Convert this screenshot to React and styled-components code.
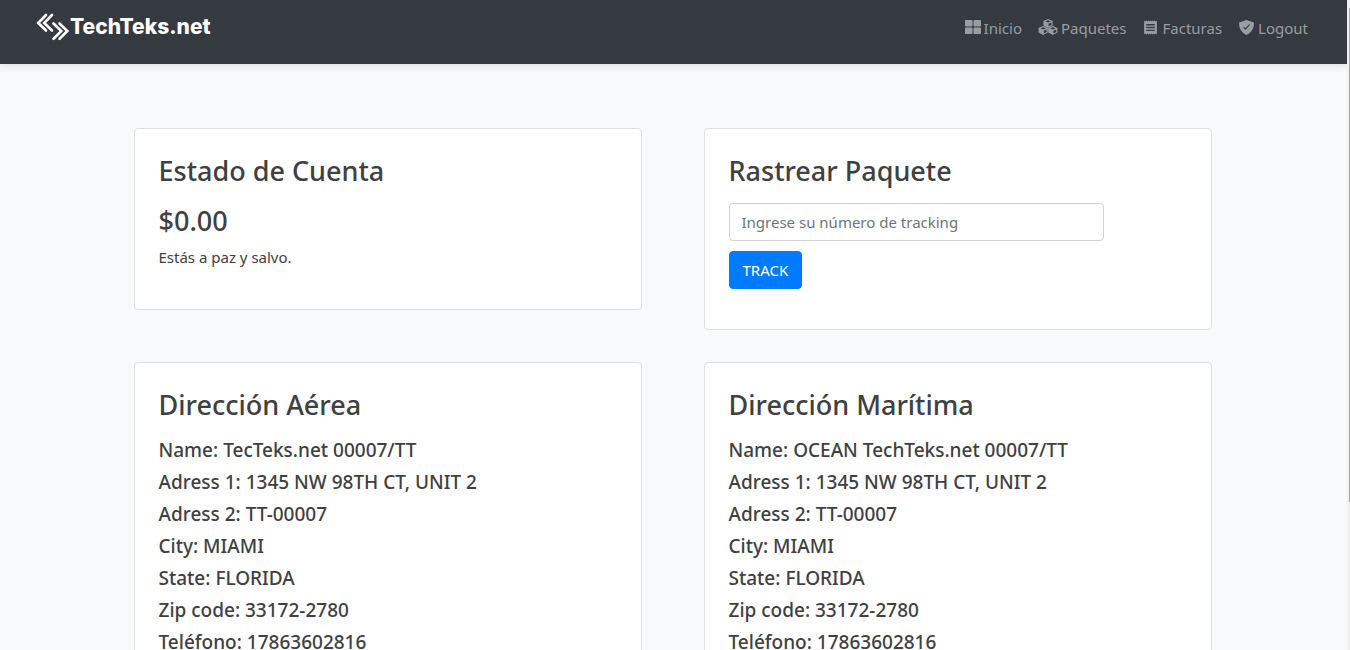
import React from 'react'
import styled, { createGlobalStyle } from 'styled-components'
import { FaThLarge } from 'react-icons/fa'
import { MdReceipt } from 'react-icons/md'
import { IoShieldCheckmark } from 'react-icons/io5'

const GlobalStyle = createGlobalStyle`
    *, *::before, *::after {
        box-sizing: border-box;
    }

    body {
        margin: 0;
        background-color: #f8f9fb;
        color: #404040;
        font-family: "Segoe UI", "Noto Sans", "Liberation Sans", sans-serif;
        font-size: 15px;
        line-height: 24px;
    }
`;

const Page = styled.div`
    padding-right: 3px;
`;

const ScrollRail = styled.div`
    position: fixed;
    top: 0;
    right: 0;
    bottom: 0;
    width: 3px;
    padding-top: 8px;
    background-color: #f1f1f1;
`;

const ScrollThumb = styled.div`
    width: 1px;
    height: 77%;
    margin-left: auto;
    background-color: #a8a8a8;
`;

const Navbar = styled.header`
    display: flex;
    justify-content: space-between;
    align-items: flex-start;
    height: 64px;
    padding: 12px 39px 0 36px;
    background-color: #343a40;
    box-shadow: 0 2px 8px rgba(0, 0, 0, 0.1);
`;

const Brand = styled.a`
    display: flex;
    align-items: center;
    color: white;
    font-family: Inter, sans-serif;
    font-size: 21px;
    font-weight: 800;
    line-height: 30px;
    text-decoration: none;
`;

const Nav = styled.nav`
    display: flex;
    gap: 16px;
    padding-top: 4px;
`;

const NavLink = styled.a`
    display: flex;
    gap: 3px;
    color: #9a9da0;
    text-decoration: none;

    svg {
        margin-top: 3px;
    }
`;

const Container = styled.main`
    display: grid;
    grid-template-columns: 1fr 1fr;
    align-items: start;
    gap: 32px 62px;
    max-width: 1140px;
    margin: 0 auto;
    padding: 64px 32px 64px 30px;
`;

const Card = styled.section`
    padding: 24px 24px 40px;
    background-color: white;
    border: 1px solid #dfdfdf;
    border-radius: 4px;
`;

const Title = styled.h3`
    margin: 0;
    padding-bottom: 11px;
    font-size: 27px;
    font-weight: 500;
    line-height: 36px;
`;

const Balance = styled(Title)`
    padding: 3px 0 6px;
`;

const Note = styled.p`
    margin: 0;
`;

const TrackForm = styled.form`
    display: flex;
    flex-direction: column;
    align-items: flex-start;
    gap: 10px;
    padding-top: 3px;
`;

const TrackInput = styled.input`
    width: 82%;
    height: 38px;
    padding: 6px 12px;
    border: 1px solid #ced4da;
    border-radius: 4px;
    color: #495057;
    font: inherit;

    &::placeholder {
        color: #6c757d;
    }
`;

const TrackButton = styled.button`
    height: 38px;
    padding: 6px 13px;
    border: 1px solid #007bff;
    border-radius: 4px;
    background-color: #007bff;
    color: white;
    font: inherit;
`;

const AddressLine = styled.h5`
    margin: 0;
    font-size: 19px;
    font-weight: 500;
    line-height: 32px;
`;

const LogoMark = () => (
    <svg width="34" height="30" viewBox="0 0 34 30" fill="none" stroke="white" strokeWidth="2.6" strokeLinecap="round">
        <path d="M10 3 L2.2 11 L10 18.5 M16 3 L8.2 11 L16 18.5" />
        <path d="M17.5 11.5 L25.3 19 L17.5 26.8 M23.5 11.5 L31.3 19 L23.5 26.8" />
    </svg>
)

// one box, with its lid and right side left open
const cube = 'M5 0 L9.6 2 V6.6 L5 9 L0.4 6.6 V2 Z M5 1.2 L2.4 2.4 L5 3.6 L7.6 2.4 Z M5.6 4.8 V7.4 L8.4 6 V3.6 Z'

const CubesIcon = () => (
    <svg width="20" height="16" viewBox="0 0 20 16" fill="currentColor" fillRule="evenodd">
        <path d={cube} transform="translate(5 0)" />
        <path d={cube} transform="translate(0.2 7)" />
        <path d={cube} transform="translate(9.8 7)" />
    </svg>
)

const navLinks = [
    { label: 'Inicio', href: '/', icon: <FaThLarge size={16} /> },
    { label: 'Paquetes', href: '/paquetes', icon: <CubesIcon /> },
    { label: 'Facturas', href: '/facturas', icon: <MdReceipt size={17} /> },
    { label: 'Logout', href: '/logout', icon: <IoShieldCheckmark size={17} /> },
]

const addresses = [
    { title: 'Dirección Aérea', name: 'TecTeks.net 00007/TT' },
    { title: 'Dirección Marítima', name: 'OCEAN TechTeks.net 00007/TT' },
]

const Header = () => (
    <Navbar>
        <Brand href='/'><LogoMark />TechTeks.net</Brand>
        <Nav>
            {navLinks.map(link => (
                <NavLink key={link.label} href={link.href}>{link.icon}{link.label}</NavLink>
            ))}
        </Nav>
    </Navbar>
)

const Address = ({ title, name }) => (
    <Card>
        <Title>{title}</Title>
        <AddressLine>Name: {name}</AddressLine>
        <AddressLine>Adress 1: 1345 NW 98TH CT, UNIT 2</AddressLine>
        <AddressLine>Adress 2: TT-00007</AddressLine>
        <AddressLine>City: MIAMI</AddressLine>
        <AddressLine>State: FLORIDA</AddressLine>
        <AddressLine>Zip code: 33172-2780</AddressLine>
        <AddressLine>Teléfono: 17863602816</AddressLine>
    </Card>
)

const App = () => {
    return (
        <Page>
            <GlobalStyle />
            <Header />
            <Container>
                <Card>
                    <Title>Estado de Cuenta</Title>
                    <Balance as='p'>$0.00</Balance>
                    <Note>Estás a paz y salvo.</Note>
                </Card>
                <Card>
                    <Title>Rastrear Paquete</Title>
                    <TrackForm onSubmit={e => e.preventDefault()}>
                        <TrackInput type='text' aria-label='Número de tracking' placeholder='Ingrese su número de tracking' />
                        <TrackButton type='submit'>TRACK</TrackButton>
                    </TrackForm>
                </Card>
                {addresses.map(address => <Address key={address.title} {...address} />)}
            </Container>
            <ScrollRail><ScrollThumb /></ScrollRail>
        </Page>
    )
}

export default App
